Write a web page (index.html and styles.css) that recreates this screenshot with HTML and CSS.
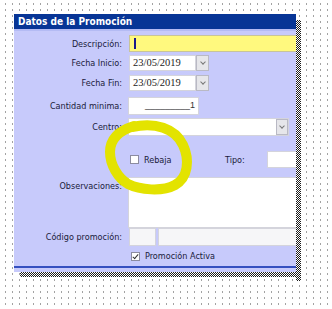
FILE: index.html
```html
<!DOCTYPE html>
<html lang="es">
<head>
    <meta charset="UTF-8">
    <title>Datos de la Promoción</title>
    <link rel="stylesheet" href="styles.css">
</head>
<body>
    <div class="sheet">
        <div class="panel">
            <div class="title">Datos de la Promoción</div>
            <div class="form">
                <div class="row r-desc">
                    <span class="lbl">Descripción:</span>
                    <div class="input desc"><span class="caret"></span></div>
                </div>
                <div class="row r-date">
                    <span class="lbl">Fecha Inicio:</span>
                    <div class="input date">23/05/2019</div>
                    <span class="drop"><span class="chev"></span></span>
                </div>
                <div class="row r-date2">
                    <span class="lbl">Fecha Fin:</span>
                    <div class="input date">23/05/2019</div>
                    <span class="drop"><span class="chev"></span></span>
                </div>
                <div class="row r-cant">
                    <span class="lbl">Cantidad minima:</span>
                    <div class="input cant">_________1</div>
                </div>
                <div class="row r-centro">
                    <span class="lbl">Centro:</span>
                    <div class="input centro"><span class="drop small"><span class="chev"></span></span></div>
                </div>
                <div class="row r-rebaja">
                    <span class="lbl"></span>
                    <span class="check"></span>
                    <span class="txt rebaja">Rebaja</span>
                    <span class="txt tipo">Tipo:</span>
                    <div class="input tipo-in"></div>
                </div>
                <div class="row r-obs">
                    <span class="lbl top">Observaciones:</span>
                    <div class="input obs"></div>
                </div>
                <div class="row r-cod">
                    <span class="lbl">Código promoción:</span>
                    <div class="input cod1"></div>
                    <div class="input cod2"></div>
                </div>
                <div class="row r-act">
                    <span class="lbl"></span>
                    <span class="check on"></span>
                    <span class="txt">Promoción Activa</span>
                </div>
            </div>
            <div class="foot"></div>
        </div>
        <!-- marker scribble drawn over the screenshot -->
        <svg class="mark" width="332" height="309" viewBox="0 0 332 309">
            <path d="M132 127 C155 122 175 128 183 145 C190 160 188 178 175 185 C162 192 140 190 128 184 C118 178 110 165 110 152 C110 140 118 131 134 126"
                  fill="none" stroke="#e3e300" stroke-width="10" stroke-linecap="round"/>
        </svg>
    </div>
</body>
</html>
```

FILE: styles.css
```css
body {
    margin: 0;
    background: #fff;
    font-family: "DejaVu Sans Condensed", "DejaVu Sans", sans-serif;
    font-stretch: condensed;
    font-size: 9px;
    color: #1a1a3a;
}
.sheet {
    position: relative;
    width: 332px;
    height: 309px;
    overflow: hidden;
    background-image: radial-gradient(#8a8a8a 0.5px, transparent 0.9px);
    background-size: 7px 6px;
    background-position: 2px 1px;
}
.panel {
    position: relative;
    margin: 14px 0 0 14px;
    width: 282px;
    height: 258px;
    background: #c7cafb;
    display: flex;
    flex-direction: column;
}
.panel::before {
    content: "";
    position: absolute;
    left: 282px;
    top: 6px;
    width: 5px;
    height: 261px;
    background: repeating-conic-gradient(#1c1c1c 0 25%, #fff 0 50%) 0 0 / 2px 2px;
}
.panel::after {
    content: "";
    position: absolute;
    left: 6px;
    top: 258px;
    width: 281px;
    height: 5px;
    background: repeating-conic-gradient(#1c1c1c 0 25%, #fff 0 50%) 0 0 / 2px 2px;
}
.title {
    height: 15px;
    background: #073596;
    color: #fff;
    font-weight: bold;
    font-size: 10px;
    line-height: 15px;
    padding-left: 4px;
    border-bottom: 2px solid #b4bbf4;
}
.form {
    padding-top: 4px;
    display: flex;
    flex-direction: column;
}
.row {
    display: flex;
    align-items: center;
}
.lbl {
    width: 108px;
    flex: none;
    text-align: right;
    margin-right: 7px;
}
.lbl.top {
    align-self: flex-start;
    margin-top: 4px;
}
.input {
    background: #fff;
    border: 1px solid #d4d4dc;
    box-sizing: border-box;
}
.r-desc .input {
    height: 17px;
    flex: 1;
    background: #fff97e;
    border-color: #c8c49a;
    border-right: none;
    padding: 2px 0 0 4px;
}
.caret {
    display: block;
    width: 2px;
    height: 11px;
    background: #1a1a8a;
}
.r-date {
    margin-top: 3px;
}
.r-date2 {
    margin-top: 4px;
}
.date {
    width: 67px;
    height: 16px;
    font-family: "Liberation Serif", serif;
    font-stretch: normal;
    font-size: 10.5px;
    line-height: 14px;
    padding-left: 3px;
    color: #222;
}
.drop {
    width: 13px;
    height: 16px;
    box-sizing: border-box;
    background: #e6e6ea;
    border: 1px solid #b9b9c4;
    display: flex;
    justify-content: center;
    align-items: center;
}
.chev {
    width: 3px;
    height: 3px;
    border-right: 1px solid #777;
    border-bottom: 1px solid #777;
    transform: rotate(45deg);
    margin-top: -2px;
}
.r-cant {
    margin-top: 6px;
}
.r-cant .lbl,
.r-centro .lbl,
.r-obs .lbl {
    margin-right: 6px;
}
.cant {
    width: 71px;
    height: 18px;
    text-align: right;
    padding-right: 3px;
    line-height: 14px;
    font-family: "Liberation Sans", sans-serif;
    font-stretch: normal;
    color: #333;
}
.r-centro {
    margin-top: 3px;
}
.centro {
    width: 161px;
    height: 18px;
    display: flex;
    justify-content: flex-end;
    align-items: center;
}
.drop.small {
    width: 12px;
    height: 16px;
}
.r-rebaja {
    margin-top: 15px;
    height: 17px;
}
.check {
    width: 9px;
    height: 9px;
    background: #fff;
    border: 1px solid #8c8ca0;
    box-sizing: border-box;
    margin-left: 1px;
    position: relative;
}
.check.on::after {
    content: "";
    position: absolute;
    left: 2px;
    top: 0;
    width: 2px;
    height: 5px;
    border-right: 1.5px solid #333;
    border-bottom: 1.5px solid #333;
    transform: rotate(40deg);
}
.rebaja {
    margin-left: 5px;
    width: 81px;
}
.tipo {
    width: 42px;
}
.tipo-in {
    flex: 1;
    height: 17px;
    border-right: none;
}
.r-obs {
    margin-top: 9px;
}
.obs {
    flex: 1;
    height: 51px;
    border-right: none;
}
.cod1 {
    width: 27px;
    height: 18px;
    background: #f6f6f8;
}
.cod2 {
    flex: 1;
    height: 18px;
    margin-left: 2px;
    background: #f6f6f8;
    border-right: none;
}
.r-act {
    margin-top: 5px;
}
.r-act .check {
    margin-left: 2px;
}
.r-act .txt {
    margin-left: 5px;
}
.foot {
    margin-top: auto;
    margin-bottom: 4px;
    height: 2px;
    background: #3550c0;
}
.mark {
    position: absolute;
    left: 0;
    top: 0;
}
```
